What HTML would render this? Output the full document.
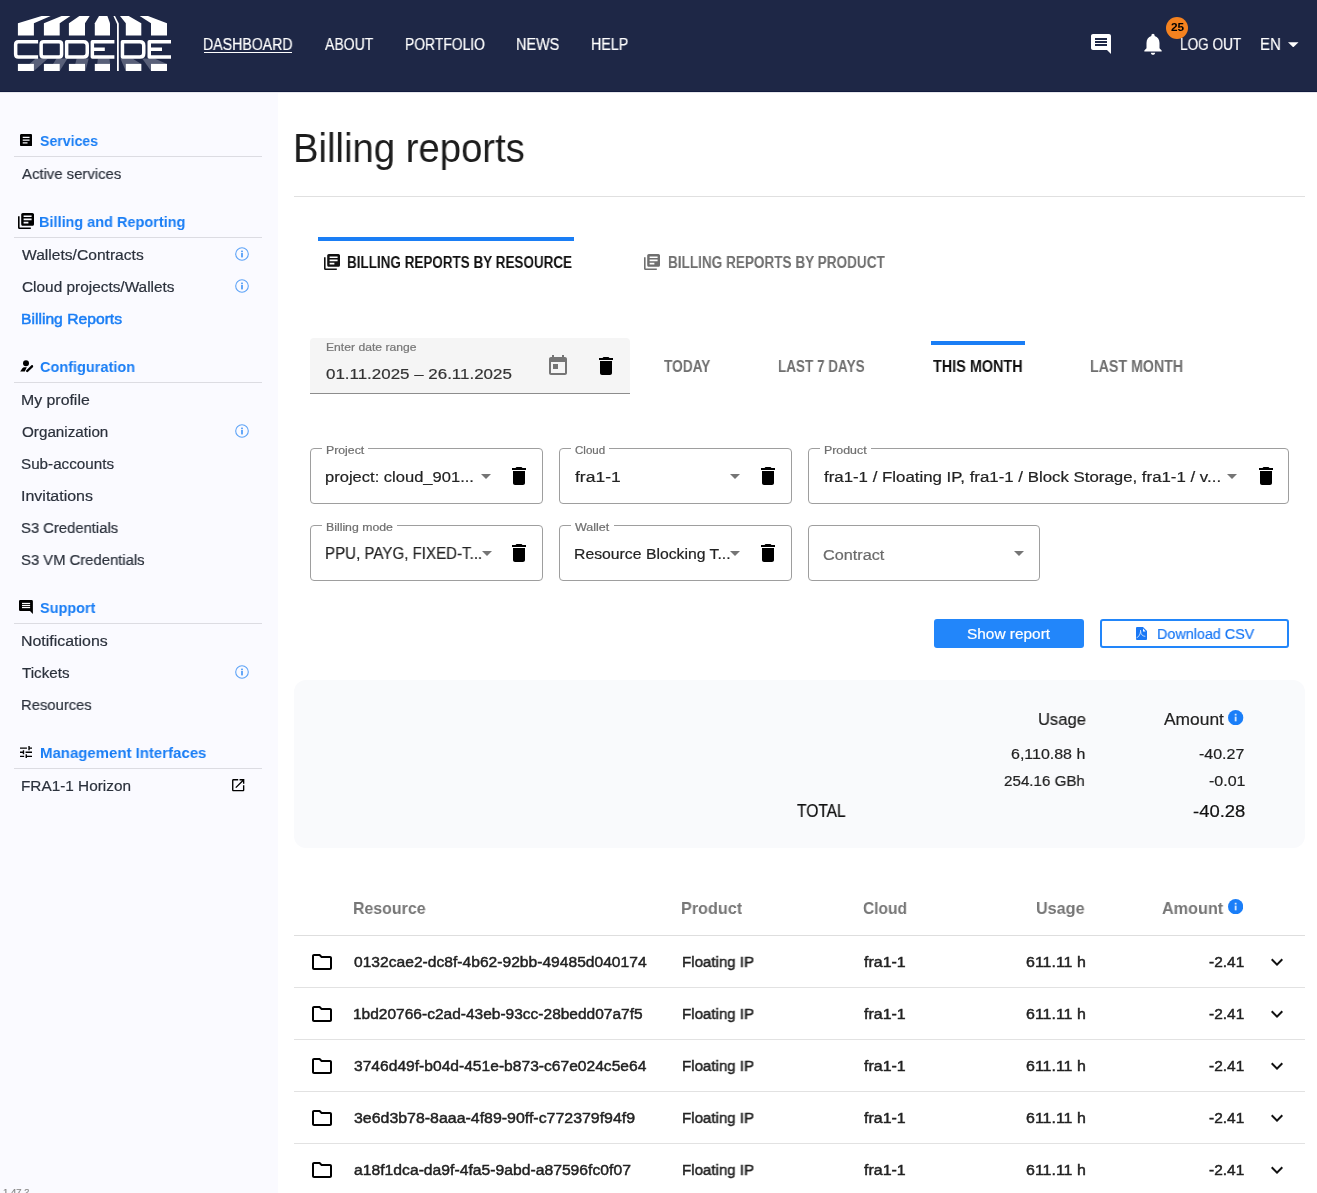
<!DOCTYPE html>
<html><head><meta charset="utf-8"><title>Billing reports</title>
<style>
html,body{margin:0;padding:0;background:#fff;width:1317px;height:1193px;overflow:hidden;position:relative}
.t{position:absolute;white-space:pre;line-height:1;font-family:"Liberation Sans",sans-serif;transform-origin:0 0;will-change:transform}
svg{display:block}
</style></head><body>
<div style="position:absolute;left:0;top:0;width:1317px;height:91px;background:#1e2746"></div>
<div style="position:absolute;left:0;top:91px;width:1317px;height:1px;background:#111a3e"></div>
<div style="position:absolute;left:0;top:92px;width:1317px;height:1px;background:#e6e7ec"></div>
<div style="position:absolute;left:204px;top:52px;width:88px;height:1px;background:#fff"></div>
<svg style="position:absolute;left:1288px;top:41.5px" width="10.5" height="5.5" viewBox="0 0 10 5"><path d="M0 0h10L5 5z" fill="#fff"/></svg>
<svg style="position:absolute;left:1089px;top:32px" width="24" height="24" viewBox="0 0 24 24"><path fill="#fff" d="M21.99 4c0-1.1-.89-2-1.99-2H4c-1.1 0-2 .9-2 2v12c0 1.1.9 2 2 2h14l4 4-.01-18zM18 14H6v-2h12v2zm0-3H6V9h12v2zm0-3H6V6h12v2z"/></svg>
<svg style="position:absolute;left:1140px;top:30.5px" width="26" height="26" viewBox="0 0 24 24"><path fill="#fff" d="M12 22c1.1 0 2-.9 2-2h-4c0 1.1.89 2 2 2zm6-6v-5c0-3.07-1.64-5.64-4.5-6.32V4c0-.83-.67-1.5-1.5-1.5s-1.5.67-1.5 1.5v.68C7.63 5.36 6 7.92 6 11v5l-2 2v1h16v-1l-2-2z"/></svg>
<div style="position:absolute;left:1166px;top:17px;width:22px;height:22px;border-radius:50%;background:#f5821f"></div>
<svg style="position:absolute;left:0;top:0" width="180" height="80" viewBox="0 0 180 80">
<g fill="#596079">
<polygon points="35.6,58.6 47.9,58.6 33.9,71 21.6,71"/>
<polygon points="56.5,58.6 67.5,58.6 59.7,71 48.7,71"/>
<polygon points="76.6,58.6 88.7,58.6 85.5,71 73.5,71"/>
<polygon points="97.9,58.6 109.4,58.6 110.2,64 97.2,64"/>
<polygon points="120.4,58.6 132.5,58.6 141.3,64 141.3,71 125.8,71"/>
<polygon points="142.2,58.6 154.5,58.6 167,64 151,71"/>
</g>
<g fill="#fff">
<polygon points="17.9,23.2 41.6,16.1 50.7,16.1 33.9,23.2 33.9,35.6 17.9,35.6"/>
<polygon points="43.9,23.2 61.6,16.1 70.4,16.1 59.7,23.2 59.7,35.6 43.9,35.6"/>
<polygon points="68.9,23.2 79.4,16.1 89.7,16.1 85,23.2 85,35.6 68.9,35.6"/>
<polygon points="94.8,23.2 99,16.1 107.4,16.1 110,23.2 110,35.6 94.8,35.6"/>
<polygon points="125.8,23.2 120,16.1 128.7,16.1 141.3,23.2 141.3,35.6 125.8,35.6"/>
<polygon points="151,23.2 139.7,16.1 148,16.1 167,23.2 167,35.6 151,35.6"/>
<rect x="17.9" y="63.9" width="16" height="7.1"/>
<rect x="43.9" y="63.9" width="15.8" height="7.1"/>
<rect x="68.9" y="63.9" width="16.1" height="7.1"/>
<rect x="94.8" y="63.9" width="15.2" height="7.1"/>
<rect x="125.8" y="63.9" width="15.5" height="7.1"/>
<rect x="151" y="63.9" width="16" height="7.1"/>
<polygon points="113.4,16 115,16 118.8,23.5 118.8,71 117,71 117,24"/>
</g>

<g fill="none" stroke="#fff" stroke-width="3.5" stroke-linejoin="round">
<path d="M38.1,41.75 H18.4 Q15.65,41.75 15.65,44.5 V54.2 Q15.65,56.95 18.4,56.95 H38.1"/>
<path d="M43.6,41.75 H59.1 Q61.55,41.75 61.55,44.2 V54.5 Q61.55,56.95 59.1,56.95 H43.6 Q41.15,56.95 41.15,54.5 V44.2 Q41.15,41.75 43.6,41.75 Z"/>
<path d="M66.65,41.75 H83.5 Q87.25,41.75 87.25,45.5 V53.2 Q87.25,56.95 83.5,56.95 H66.65 Z"/>
<path d="M114.4,41.75 H92.35 V56.95 H114.4 M92.35,49.35 H104.8"/>
<path d="M122.45,41.75 H140 Q143.75,41.75 143.75,45.5 V53.2 Q143.75,56.95 140,56.95 H122.45 Z"/>
<path d="M171,41.75 H149.25 V56.95 H171 M149.25,49.35 H162"/>
</g>
</svg>
<div style="position:absolute;left:0;top:93px;width:278px;height:1100px;background:#fafaff"></div>
<div style="position:absolute;left:14px;top:156px;width:248px;height:1px;background:#dcdce2"></div>
<div style="position:absolute;left:14px;top:237px;width:248px;height:1px;background:#dcdce2"></div>
<div style="position:absolute;left:14px;top:382px;width:248px;height:1px;background:#dcdce2"></div>
<div style="position:absolute;left:14px;top:623px;width:248px;height:1px;background:#dcdce2"></div>
<div style="position:absolute;left:14px;top:768px;width:248px;height:1px;background:#dcdce2"></div>
<svg style="position:absolute;left:235px;top:247px" width="14" height="14" viewBox="0 0 14 14"><circle cx="7" cy="7" r="6.3" fill="none" stroke="#5da3f7" stroke-width="1.1"/><rect x="6.15" y="5.9" width="1.7" height="4.5" fill="#4a98f7"/><rect x="6.15" y="3.6" width="1.7" height="1.5" fill="#4a98f7"/></svg>
<svg style="position:absolute;left:235px;top:279px" width="14" height="14" viewBox="0 0 14 14"><circle cx="7" cy="7" r="6.3" fill="none" stroke="#5da3f7" stroke-width="1.1"/><rect x="6.15" y="5.9" width="1.7" height="4.5" fill="#4a98f7"/><rect x="6.15" y="3.6" width="1.7" height="1.5" fill="#4a98f7"/></svg>
<svg style="position:absolute;left:235px;top:424px" width="14" height="14" viewBox="0 0 14 14"><circle cx="7" cy="7" r="6.3" fill="none" stroke="#5da3f7" stroke-width="1.1"/><rect x="6.15" y="5.9" width="1.7" height="4.5" fill="#4a98f7"/><rect x="6.15" y="3.6" width="1.7" height="1.5" fill="#4a98f7"/></svg>
<svg style="position:absolute;left:235px;top:665px" width="14" height="14" viewBox="0 0 14 14"><circle cx="7" cy="7" r="6.3" fill="none" stroke="#5da3f7" stroke-width="1.1"/><rect x="6.15" y="5.9" width="1.7" height="4.5" fill="#4a98f7"/><rect x="6.15" y="3.6" width="1.7" height="1.5" fill="#4a98f7"/></svg>
<svg style="position:absolute;left:229.85px;top:776.7px" width="16.4" height="16.4" viewBox="0 0 24 24"><path fill="#000" d="M19 19H5V5h7V3H5c-1.11 0-2 .9-2 2v14c0 1.1.89 2 2 2h14c1.1 0 2-.9 2-2v-7h-2v7zM14 3v2h3.59l-9.83 9.83 1.41 1.41L19 6.41V10h2V3h-7z"/></svg>
<svg style="position:absolute;left:19.8px;top:133.8px" width="12.3" height="12.3" viewBox="3 3 18 18"><path fill="#000" d="M19 3H5c-1.1 0-2 .9-2 2v14c0 1.1.9 2 2 2h14c1.1 0 2-.9 2-2V5c0-1.1-.9-2-2-2zm-5 14H7v-2h7v2zm3-4H7v-2h10v2zm0-4H7V7h10v2z"/></svg>
<svg style="position:absolute;left:18px;top:213px" width="16" height="16" viewBox="2 2 20 20"><path fill="#000" d="M4 6H2v14c0 1.1.9 2 2 2h14v-2H4V6zm16-4H8c-1.1 0-2 .9-2 2v12c0 1.1.9 2 2 2h12c1.1 0 2-.9 2-2V4c0-1.1-.9-2-2-2zm-1 9H9V9h10v2zm-4 4H9v-2h6v2zm4-8H9V5h10v2z"/></svg>
<svg style="position:absolute;left:14px;top:354px" width="26" height="24" viewBox="0 0 26 24"><circle cx="12" cy="9.2" r="3" fill="#000"/><path d="M6.2,17.5 L8.2,14.6 Q9,13.3 10.5,13.3 L12.8,13.3 L10.8,17.5 Z" fill="#000"/><path d="M13.2,17 L18,12.3" stroke="#000" stroke-width="2.4" stroke-linecap="round"/><path d="M17.3,11.3 L19,11.7 L18.6,13.4Z" fill="#000"/></svg>
<svg style="position:absolute;left:19px;top:600px" width="14" height="14" viewBox="0 0 14 14"><path fill="#000" d="M1.3,0 H12.6 Q13.9,0 13.9,1.3 V13.9 L11,11 H1.3 Q0,11 0,9.7 V1.3 Q0,0 1.3,0 Z"/><rect x="3" y="2.85" width="8.1" height="1.2" fill="#fff"/><rect x="3" y="4.9" width="8.1" height="1.2" fill="#fff"/><rect x="3" y="6.95" width="8.1" height="1.2" fill="#fff"/></svg>
<svg style="position:absolute;left:19.6px;top:745.8px" width="12.5" height="12.5" viewBox="3 3 18 18"><path fill="#000" d="M3 17v2h6v-2H3zM3 5v2h10V5H3zm10 16v-2h8v-2h-8v-2h-2v6h2zM7 9v2H3v2h4v2h2V9H7zm14 4v-2H11v2h10zm-6-4h2V7h4V5h-4V3h-2v6z"/></svg>
<div style="position:absolute;left:294px;top:196px;width:1011px;height:1px;background:#e0e0e0"></div>
<div style="position:absolute;left:318px;top:237px;width:256px;height:4px;background:#1a7ef5"></div>
<svg style="position:absolute;left:324px;top:254px" width="16" height="16" viewBox="2 2 20 20"><path fill="#111" d="M4 6H2v14c0 1.1.9 2 2 2h14v-2H4V6zm16-4H8c-1.1 0-2 .9-2 2v12c0 1.1.9 2 2 2h12c1.1 0 2-.9 2-2V4c0-1.1-.9-2-2-2zm-1 9H9V9h10v2zm-4 4H9v-2h6v2zm4-8H9V5h10v2z"/></svg>
<svg style="position:absolute;left:644px;top:254px" width="16" height="16" viewBox="2 2 20 20"><path fill="#6f6f6f" d="M4 6H2v14c0 1.1.9 2 2 2h14v-2H4V6zm16-4H8c-1.1 0-2 .9-2 2v12c0 1.1.9 2 2 2h12c1.1 0 2-.9 2-2V4c0-1.1-.9-2-2-2zm-1 9H9V9h10v2zm-4 4H9v-2h6v2zm4-8H9V5h10v2z"/></svg>
<div style="position:absolute;left:310px;top:338px;width:320px;height:55px;background:#f5f5f5;border-radius:4px 4px 0 0;border-bottom:1px solid #8d8d8d"></div>
<svg style="position:absolute;left:546px;top:354px" width="24" height="24" viewBox="0 0 24 24"><path fill="#757575" d="M19 3h-1V1h-2v2H8V1H6v2H5c-1.11 0-1.99.9-1.99 2L3 19c0 1.1.89 2 2 2h14c1.1 0 2-.9 2-2V5c0-1.1-.9-2-2-2zm0 16H5V8h14v11zM7 10h5v5H7z"/></svg>
<svg style="position:absolute;left:594px;top:354px" width="24" height="24" viewBox="0 0 24 24"><path fill="#000" d="M6 19c0 1.1.9 2 2 2h8c1.1 0 2-.9 2-2V7H6v12zM19 4h-3.5l-1-1h-5l-1 1H5v2h14V4z"/></svg>
<div style="position:absolute;left:931px;top:341px;width:94px;height:4px;background:#1a7ef5"></div>
<div style="position:absolute;left:310px;top:448px;width:231px;height:54px;border:1px solid #9e9e9e;border-radius:4px"></div>
<div style="position:absolute;left:321.5px;top:446px;width:46.60000000000002px;height:4px;background:#fff"></div>
<svg style="position:absolute;left:481px;top:474px" width="10" height="5" viewBox="0 0 10 5"><path d="M0 0h10L5 5z" fill="#757575"/></svg>
<svg style="position:absolute;left:507px;top:464px" width="24" height="24" viewBox="0 0 24 24"><path fill="#000" d="M6 19c0 1.1.9 2 2 2h8c1.1 0 2-.9 2-2V7H6v12zM19 4h-3.5l-1-1h-5l-1 1H5v2h14V4z"/></svg>
<div style="position:absolute;left:559px;top:448px;width:231px;height:54px;border:1px solid #9e9e9e;border-radius:4px"></div>
<div style="position:absolute;left:570.5px;top:446px;width:38.299999999999955px;height:4px;background:#fff"></div>
<svg style="position:absolute;left:730px;top:474px" width="10" height="5" viewBox="0 0 10 5"><path d="M0 0h10L5 5z" fill="#757575"/></svg>
<svg style="position:absolute;left:756px;top:464px" width="24" height="24" viewBox="0 0 24 24"><path fill="#000" d="M6 19c0 1.1.9 2 2 2h8c1.1 0 2-.9 2-2V7H6v12zM19 4h-3.5l-1-1h-5l-1 1H5v2h14V4z"/></svg>
<div style="position:absolute;left:808px;top:448px;width:479px;height:54px;border:1px solid #9e9e9e;border-radius:4px"></div>
<div style="position:absolute;left:819.5px;top:446px;width:51.0px;height:4px;background:#fff"></div>
<svg style="position:absolute;left:1227px;top:474px" width="10" height="5" viewBox="0 0 10 5"><path d="M0 0h10L5 5z" fill="#757575"/></svg>
<svg style="position:absolute;left:1253.7px;top:464px" width="24" height="24" viewBox="0 0 24 24"><path fill="#000" d="M6 19c0 1.1.9 2 2 2h8c1.1 0 2-.9 2-2V7H6v12zM19 4h-3.5l-1-1h-5l-1 1H5v2h14V4z"/></svg>
<div style="position:absolute;left:310px;top:525px;width:231px;height:54px;border:1px solid #9e9e9e;border-radius:4px"></div>
<div style="position:absolute;left:321.5px;top:523px;width:75.0px;height:4px;background:#fff"></div>
<svg style="position:absolute;left:481.5px;top:551px" width="10" height="5" viewBox="0 0 10 5"><path d="M0 0h10L5 5z" fill="#757575"/></svg>
<svg style="position:absolute;left:507px;top:541px" width="24" height="24" viewBox="0 0 24 24"><path fill="#000" d="M6 19c0 1.1.9 2 2 2h8c1.1 0 2-.9 2-2V7H6v12zM19 4h-3.5l-1-1h-5l-1 1H5v2h14V4z"/></svg>
<div style="position:absolute;left:559px;top:525px;width:231px;height:54px;border:1px solid #9e9e9e;border-radius:4px"></div>
<div style="position:absolute;left:570.5px;top:523px;width:43.200000000000045px;height:4px;background:#fff"></div>
<svg style="position:absolute;left:730px;top:551px" width="10" height="5" viewBox="0 0 10 5"><path d="M0 0h10L5 5z" fill="#757575"/></svg>
<svg style="position:absolute;left:756px;top:541px" width="24" height="24" viewBox="0 0 24 24"><path fill="#000" d="M6 19c0 1.1.9 2 2 2h8c1.1 0 2-.9 2-2V7H6v12zM19 4h-3.5l-1-1h-5l-1 1H5v2h14V4z"/></svg>
<div style="position:absolute;left:808px;top:525px;width:230px;height:54px;border:1px solid #9e9e9e;border-radius:4px"></div>
<svg style="position:absolute;left:1014px;top:551px" width="10" height="5" viewBox="0 0 10 5"><path d="M0 0h10L5 5z" fill="#757575"/></svg>
<div style="position:absolute;left:934px;top:619px;width:150px;height:29px;background:#2286fa;border-radius:3px"></div>
<div style="position:absolute;left:1100px;top:619px;width:185px;height:25px;border:2px solid #2286fa;border-radius:3px"></div>
<svg style="position:absolute;left:1136px;top:627px" width="11" height="13" viewBox="0 0 11 13"><path d="M1,0 H7 L11,4 V12 Q11,13 10,13 H1 Q0,13 0,12 V1 Q0,0 1,0Z" fill="#1a78f5"/><path d="M7,1.6 L9.6,4.6 H7Z" fill="#fff"/><path d="M0.6,10.8 Q3,10 4,7 Q4.8,4 4.5,3.3 Q4.5,7 6.5,8.5 Q8,9.3 9.3,9.3" fill="none" stroke="#cfe2fd" stroke-width="0.9"/></svg>
<div style="position:absolute;left:294px;top:680px;width:1011px;height:168px;background:#f9fafc;border-radius:12px"></div>
<svg style="position:absolute;left:1228.3px;top:710.2px" width="15.3" height="15.3" viewBox="0 0 15 15"><circle cx="7.5" cy="7.5" r="7.5" fill="#1a7ef8"/><rect x="6.6" y="6.5" width="1.8" height="4.6" fill="#d5e6fd"/><rect x="6.6" y="3.7" width="1.8" height="1.7" fill="#d5e6fd"/></svg>
<svg style="position:absolute;left:1228px;top:899.2px" width="15.3" height="15.3" viewBox="0 0 15 15"><circle cx="7.5" cy="7.5" r="7.5" fill="#1a7ef8"/><rect x="6.6" y="6.5" width="1.8" height="4.6" fill="#d5e6fd"/><rect x="6.6" y="3.7" width="1.8" height="1.7" fill="#d5e6fd"/></svg>
<div style="position:absolute;left:294px;top:935px;width:1011px;height:1px;background:#dedede"></div>
<svg style="position:absolute;left:310px;top:950px" width="24" height="24" viewBox="0 0 24 24"><path fill="#000" d="M9.17 6l2 2H20v10H4V6h5.17M10 4H4c-1.1 0-1.99.9-1.99 2L2 18c0 1.1.9 2 2 2h16c1.1 0 2-.9 2-2V8c0-1.1-.9-2-2-2h-8l-2-2z"/></svg>
<svg style="position:absolute;left:1264.5px;top:949.8px" width="24" height="24" viewBox="0 0 24 24"><path fill="#111" d="M16.59 8.59L12 13.17 7.41 8.59 6 10l6 6 6-6z"/></svg>
<div style="position:absolute;left:294px;top:987px;width:1011px;height:1px;background:#e2e2e2"></div>
<svg style="position:absolute;left:310px;top:1002px" width="24" height="24" viewBox="0 0 24 24"><path fill="#000" d="M9.17 6l2 2H20v10H4V6h5.17M10 4H4c-1.1 0-1.99.9-1.99 2L2 18c0 1.1.9 2 2 2h16c1.1 0 2-.9 2-2V8c0-1.1-.9-2-2-2h-8l-2-2z"/></svg>
<svg style="position:absolute;left:1264.5px;top:1001.8px" width="24" height="24" viewBox="0 0 24 24"><path fill="#111" d="M16.59 8.59L12 13.17 7.41 8.59 6 10l6 6 6-6z"/></svg>
<div style="position:absolute;left:294px;top:1039px;width:1011px;height:1px;background:#e2e2e2"></div>
<svg style="position:absolute;left:310px;top:1054px" width="24" height="24" viewBox="0 0 24 24"><path fill="#000" d="M9.17 6l2 2H20v10H4V6h5.17M10 4H4c-1.1 0-1.99.9-1.99 2L2 18c0 1.1.9 2 2 2h16c1.1 0 2-.9 2-2V8c0-1.1-.9-2-2-2h-8l-2-2z"/></svg>
<svg style="position:absolute;left:1264.5px;top:1053.8px" width="24" height="24" viewBox="0 0 24 24"><path fill="#111" d="M16.59 8.59L12 13.17 7.41 8.59 6 10l6 6 6-6z"/></svg>
<div style="position:absolute;left:294px;top:1091px;width:1011px;height:1px;background:#e2e2e2"></div>
<svg style="position:absolute;left:310px;top:1106px" width="24" height="24" viewBox="0 0 24 24"><path fill="#000" d="M9.17 6l2 2H20v10H4V6h5.17M10 4H4c-1.1 0-1.99.9-1.99 2L2 18c0 1.1.9 2 2 2h16c1.1 0 2-.9 2-2V8c0-1.1-.9-2-2-2h-8l-2-2z"/></svg>
<svg style="position:absolute;left:1264.5px;top:1105.8px" width="24" height="24" viewBox="0 0 24 24"><path fill="#111" d="M16.59 8.59L12 13.17 7.41 8.59 6 10l6 6 6-6z"/></svg>
<div style="position:absolute;left:294px;top:1143px;width:1011px;height:1px;background:#e2e2e2"></div>
<svg style="position:absolute;left:310px;top:1158px" width="24" height="24" viewBox="0 0 24 24"><path fill="#000" d="M9.17 6l2 2H20v10H4V6h5.17M10 4H4c-1.1 0-1.99.9-1.99 2L2 18c0 1.1.9 2 2 2h16c1.1 0 2-.9 2-2V8c0-1.1-.9-2-2-2h-8l-2-2z"/></svg>
<svg style="position:absolute;left:1264.5px;top:1157.8px" width="24" height="24" viewBox="0 0 24 24"><path fill="#111" d="M16.59 8.59L12 13.17 7.41 8.59 6 10l6 6 6-6z"/></svg>
<div class="t" id="t0" style="left:203.14px;top:36.52px;font-size:16.00px;font-weight:400;color:#ffffff;transform:scaleX(0.8837);-webkit-text-stroke:0.2px currentColor;">DASHBOARD</div>
<div class="t" id="t1" style="left:324.54px;top:36.52px;font-size:16.00px;font-weight:400;color:#ffffff;transform:scaleX(0.8775);-webkit-text-stroke:0.2px currentColor;">ABOUT</div>
<div class="t" id="t2" style="left:404.95px;top:36.52px;font-size:16.00px;font-weight:400;color:#ffffff;transform:scaleX(0.8662);-webkit-text-stroke:0.2px currentColor;">PORTFOLIO</div>
<div class="t" id="t3" style="left:516.21px;top:36.52px;font-size:16.00px;font-weight:400;color:#ffffff;transform:scaleX(0.9028);-webkit-text-stroke:0.2px currentColor;">NEWS</div>
<div class="t" id="t4" style="left:590.78px;top:36.52px;font-size:16.00px;font-weight:400;color:#ffffff;transform:scaleX(0.8890);-webkit-text-stroke:0.2px currentColor;">HELP</div>
<div class="t" id="t5" style="left:1180.35px;top:36.52px;font-size:16.00px;font-weight:400;color:#ffffff;transform:scaleX(0.8496);-webkit-text-stroke:0.2px currentColor;">LOG OUT</div>
<div class="t" id="t6" style="left:1260.46px;top:36.52px;font-size:16.00px;font-weight:400;color:#ffffff;transform:scaleX(0.9367);-webkit-text-stroke:0.2px currentColor;">EN</div>
<div class="t" id="t7" style="left:1170.51px;top:22.15px;font-size:11.40px;font-weight:700;color:#000;transform:scaleX(1.0359);">25</div>
<div class="t" id="t8" style="left:40.03px;top:133.20px;font-size:15.20px;font-weight:700;color:#1a7ef5;transform:scaleX(0.9287);">Services</div>
<div class="t" id="t9" style="left:39.10px;top:214.20px;font-size:15.20px;font-weight:700;color:#1a7ef5;transform:scaleX(0.9533);">Billing and Reporting</div>
<div class="t" id="t10" style="left:40.00px;top:359.20px;font-size:15.20px;font-weight:700;color:#1a7ef5;transform:scaleX(0.9553);">Configuration</div>
<div class="t" id="t11" style="left:40.03px;top:600.20px;font-size:15.20px;font-weight:700;color:#1a7ef5;transform:scaleX(0.9503);">Support</div>
<div class="t" id="t12" style="left:39.87px;top:745.20px;font-size:15.20px;font-weight:700;color:#1a7ef5;transform:scaleX(0.9856);">Management Interfaces</div>
<div class="t" id="t13" style="left:22.07px;top:166.20px;font-size:15.20px;font-weight:400;color:#2b313c;transform:scaleX(0.9799);-webkit-text-stroke:0.2px currentColor;">Active services</div>
<div class="t" id="t14" style="left:22.12px;top:247.20px;font-size:15.20px;font-weight:400;color:#2b313c;transform:scaleX(1.0277);-webkit-text-stroke:0.2px currentColor;">Wallets/Contracts</div>
<div class="t" id="t15" style="left:21.79px;top:279.20px;font-size:15.20px;font-weight:400;color:#2b313c;transform:scaleX(1.0133);-webkit-text-stroke:0.2px currentColor;">Cloud projects/Wallets</div>
<div class="t" id="t16" style="left:20.91px;top:392.20px;font-size:15.20px;font-weight:400;color:#2b313c;transform:scaleX(1.0442);-webkit-text-stroke:0.2px currentColor;">My profile</div>
<div class="t" id="t17" style="left:21.89px;top:424.20px;font-size:15.20px;font-weight:400;color:#2b313c;transform:scaleX(1.0023);-webkit-text-stroke:0.2px currentColor;">Organization</div>
<div class="t" id="t18" style="left:21.44px;top:456.20px;font-size:15.20px;font-weight:400;color:#2b313c;transform:scaleX(1.0014);-webkit-text-stroke:0.2px currentColor;">Sub-accounts</div>
<div class="t" id="t19" style="left:21.39px;top:488.20px;font-size:15.20px;font-weight:400;color:#2b313c;transform:scaleX(1.0526);-webkit-text-stroke:0.2px currentColor;">Invitations</div>
<div class="t" id="t20" style="left:21.44px;top:520.20px;font-size:15.20px;font-weight:400;color:#2b313c;transform:scaleX(0.9748);-webkit-text-stroke:0.2px currentColor;">S3 Credentials</div>
<div class="t" id="t21" style="left:21.44px;top:552.20px;font-size:15.20px;font-weight:400;color:#2b313c;transform:scaleX(0.9760);-webkit-text-stroke:0.2px currentColor;">S3 VM Credentials</div>
<div class="t" id="t22" style="left:20.90px;top:633.20px;font-size:15.20px;font-weight:400;color:#2b313c;transform:scaleX(1.0481);-webkit-text-stroke:0.2px currentColor;">Notifications</div>
<div class="t" id="t23" style="left:21.87px;top:665.20px;font-size:15.20px;font-weight:400;color:#2b313c;transform:scaleX(0.9996);-webkit-text-stroke:0.2px currentColor;">Tickets</div>
<div class="t" id="t24" style="left:21.08px;top:697.20px;font-size:15.20px;font-weight:400;color:#2b313c;transform:scaleX(0.9738);-webkit-text-stroke:0.2px currentColor;">Resources</div>
<div class="t" id="t25" style="left:21.02px;top:778.20px;font-size:15.20px;font-weight:400;color:#2b313c;transform:scaleX(1.0099);-webkit-text-stroke:0.2px currentColor;">FRA1-1 Horizon</div>
<div class="t" id="t26" style="left:21.25px;top:311.20px;font-size:15.20px;font-weight:400;color:#1a7ef5;transform:scaleX(1.0319);-webkit-text-stroke:0.5px currentColor;">Billing Reports</div>
<div class="t" id="t27" style="left:2.65px;top:1186.87px;font-size:9.50px;font-weight:400;color:#888;transform:scaleX(0.9948);-webkit-text-stroke:0.2px currentColor;">1.47.2</div>
<div class="t" id="t28" style="left:293.43px;top:129.26px;font-size:39.90px;font-weight:400;color:#1c1c1c;transform:scaleX(0.9591);-webkit-text-stroke:0;">Billing reports</div>
<div class="t" id="t29" style="left:347.09px;top:254.52px;font-size:16.00px;font-weight:700;color:#111;transform:scaleX(0.8422);">BILLING REPORTS BY RESOURCE</div>
<div class="t" id="t30" style="left:667.98px;top:254.52px;font-size:16.00px;font-weight:700;color:#6f6f6f;transform:scaleX(0.8478);">BILLING REPORTS BY PRODUCT</div>
<div class="t" id="t31" style="left:325.72px;top:342.96px;font-size:10.45px;font-weight:400;color:#777;transform:scaleX(1.1630);-webkit-text-stroke:0.2px currentColor;">Enter date range</div>
<div class="t" id="t32" style="left:325.69px;top:366.40px;font-size:15.20px;font-weight:400;color:#333;transform:scaleX(1.1151);-webkit-text-stroke:0.2px currentColor;">01.11.2025 – 26.11.2025</div>
<div class="t" id="t33" style="left:664.21px;top:358.52px;font-size:16.00px;font-weight:700;color:#6f6f6f;transform:scaleX(0.8549);">TODAY</div>
<div class="t" id="t34" style="left:777.99px;top:358.52px;font-size:16.00px;font-weight:700;color:#6f6f6f;transform:scaleX(0.8443);">LAST 7 DAYS</div>
<div class="t" id="t35" style="left:933.18px;top:358.52px;font-size:16.00px;font-weight:700;color:#111;transform:scaleX(0.9001);">THIS MONTH</div>
<div class="t" id="t36" style="left:1089.92px;top:358.52px;font-size:16.00px;font-weight:700;color:#6f6f6f;transform:scaleX(0.8880);">LAST MONTH</div>
<div class="t" id="t37" style="left:325.69px;top:445.56px;font-size:10.45px;font-weight:400;color:#6f6f6f;transform:scaleX(1.1765);-webkit-text-stroke:0.2px currentColor;">Project</div>
<div class="t" id="t38" style="left:325.21px;top:469.20px;font-size:15.20px;font-weight:400;color:#222;transform:scaleX(1.0889);-webkit-text-stroke:0.2px currentColor;">project: cloud_901...</div>
<div class="t" id="t39" style="left:574.82px;top:445.56px;font-size:10.45px;font-weight:400;color:#6f6f6f;transform:scaleX(1.1063);-webkit-text-stroke:0.2px currentColor;">Cloud</div>
<div class="t" id="t40" style="left:574.83px;top:469.20px;font-size:15.20px;font-weight:400;color:#222;transform:scaleX(1.1517);-webkit-text-stroke:0.2px currentColor;">fra1-1</div>
<div class="t" id="t41" style="left:823.67px;top:445.56px;font-size:10.45px;font-weight:400;color:#6f6f6f;transform:scaleX(1.1848);-webkit-text-stroke:0.2px currentColor;">Product</div>
<div class="t" id="t42" style="left:823.82px;top:469.20px;font-size:15.20px;font-weight:400;color:#222;transform:scaleX(1.1085);-webkit-text-stroke:0.2px currentColor;">fra1-1 / Floating IP, fra1-1 / Block Storage, fra1-1 / v...</div>
<div class="t" id="t43" style="left:325.69px;top:522.56px;font-size:10.45px;font-weight:400;color:#6f6f6f;transform:scaleX(1.1771);-webkit-text-stroke:0.2px currentColor;">Billing mode</div>
<div class="t" id="t44" style="left:324.57px;top:545.52px;font-size:16.00px;font-weight:400;color:#222;transform:scaleX(0.9437);-webkit-text-stroke:0.2px currentColor;">PPU, PAYG, FIXED-T...</div>
<div class="t" id="t45" style="left:574.80px;top:522.56px;font-size:10.45px;font-weight:400;color:#6f6f6f;transform:scaleX(1.1970);-webkit-text-stroke:0.2px currentColor;">Wallet</div>
<div class="t" id="t46" style="left:573.82px;top:546.20px;font-size:15.20px;font-weight:400;color:#222;transform:scaleX(1.0384);-webkit-text-stroke:0.2px currentColor;">Resource Blocking T...</div>
<div class="t" id="t47" style="left:823.39px;top:547.20px;font-size:15.20px;font-weight:400;color:#6b6b6b;transform:scaleX(1.0691);-webkit-text-stroke:0.2px currentColor;">Contract</div>
<div class="t" id="t48" style="left:967.11px;top:625.70px;font-size:15.20px;font-weight:400;color:#fff;transform:scaleX(1.0141);-webkit-text-stroke:0.2px currentColor;">Show report</div>
<div class="t" id="t49" style="left:1156.56px;top:625.70px;font-size:15.20px;font-weight:400;color:#1a78f5;transform:scaleX(0.9450);-webkit-text-stroke:0.2px currentColor;">Download CSV</div>
<div class="t" id="t50" style="left:1037.63px;top:710.77px;font-size:17.10px;font-weight:400;color:#222;transform:scaleX(0.9685);-webkit-text-stroke:0.2px currentColor;">Usage</div>
<div class="t" id="t51" style="left:1164.31px;top:710.77px;font-size:17.10px;font-weight:400;color:#222;transform:scaleX(1.0168);-webkit-text-stroke:0.2px currentColor;">Amount</div>
<div class="t" id="t52" style="left:1011.19px;top:745.50px;font-size:15.20px;font-weight:400;color:#222;transform:scaleX(1.0519);-webkit-text-stroke:0.2px currentColor;">6,110.88 h</div>
<div class="t" id="t53" style="left:1199.43px;top:745.50px;font-size:15.20px;font-weight:400;color:#222;transform:scaleX(1.0526);-webkit-text-stroke:0.2px currentColor;">-40.27</div>
<div class="t" id="t54" style="left:1004.42px;top:773.40px;font-size:15.20px;font-weight:400;color:#222;transform:scaleX(0.9975);-webkit-text-stroke:0.2px currentColor;">254.16 GBh</div>
<div class="t" id="t55" style="left:1208.55px;top:773.40px;font-size:15.20px;font-weight:400;color:#222;transform:scaleX(1.0548);-webkit-text-stroke:0.2px currentColor;">-0.01</div>
<div class="t" id="t56" style="left:797.03px;top:802.21px;font-size:18.00px;font-weight:400;color:#111;transform:scaleX(0.8643);-webkit-text-stroke:0.2px currentColor;">TOTAL</div>
<div class="t" id="t57" style="left:1193.01px;top:802.97px;font-size:17.10px;font-weight:400;color:#111;transform:scaleX(1.0785);-webkit-text-stroke:0.2px currentColor;">-40.28</div>
<div class="t" id="t58" style="left:353.27px;top:899.97px;font-size:17.10px;font-weight:700;color:#767676;transform:scaleX(0.9305);">Resource</div>
<div class="t" id="t59" style="left:681.47px;top:899.97px;font-size:17.10px;font-weight:700;color:#767676;transform:scaleX(0.9460);">Product</div>
<div class="t" id="t60" style="left:862.97px;top:899.97px;font-size:17.10px;font-weight:700;color:#767676;transform:scaleX(0.9085);">Cloud</div>
<div class="t" id="t61" style="left:1036.18px;top:899.97px;font-size:17.10px;font-weight:700;color:#767676;transform:scaleX(0.9480);">Usage</div>
<div class="t" id="t62" style="left:1162.21px;top:899.97px;font-size:17.10px;font-weight:700;color:#767676;transform:scaleX(0.9478);">Amount</div>
<div class="t" id="t63" style="left:354.16px;top:954.20px;font-size:15.20px;font-weight:400;color:#222;transform:scaleX(1.0282);-webkit-text-stroke:0.45px currentColor;">0132cae2-dc8f-4b62-92bb-49485d040174</div>
<div class="t" id="t64" style="left:681.50px;top:954.20px;font-size:15.20px;font-weight:400;color:#222;transform:scaleX(0.9926);-webkit-text-stroke:0.45px currentColor;">Floating IP</div>
<div class="t" id="t65" style="left:863.83px;top:954.20px;font-size:15.20px;font-weight:400;color:#222;transform:scaleX(1.0516);-webkit-text-stroke:0.45px currentColor;">fra1-1</div>
<div class="t" id="t66" style="left:1025.51px;top:954.20px;font-size:15.20px;font-weight:400;color:#222;transform:scaleX(1.0519);-webkit-text-stroke:0.45px currentColor;">611.11 h</div>
<div class="t" id="t67" style="left:1209.48px;top:954.20px;font-size:15.20px;font-weight:400;color:#222;transform:scaleX(1.0176);-webkit-text-stroke:0.45px currentColor;">-2.41</div>
<div class="t" id="t68" style="left:352.98px;top:1006.20px;font-size:15.20px;font-weight:400;color:#222;transform:scaleX(1.0209);-webkit-text-stroke:0.45px currentColor;">1bd20766-c2ad-43eb-93cc-28bedd07a7f5</div>
<div class="t" id="t69" style="left:681.50px;top:1006.20px;font-size:15.20px;font-weight:400;color:#222;transform:scaleX(0.9926);-webkit-text-stroke:0.45px currentColor;">Floating IP</div>
<div class="t" id="t70" style="left:863.83px;top:1006.20px;font-size:15.20px;font-weight:400;color:#222;transform:scaleX(1.0516);-webkit-text-stroke:0.45px currentColor;">fra1-1</div>
<div class="t" id="t71" style="left:1025.51px;top:1006.20px;font-size:15.20px;font-weight:400;color:#222;transform:scaleX(1.0519);-webkit-text-stroke:0.45px currentColor;">611.11 h</div>
<div class="t" id="t72" style="left:1209.48px;top:1006.20px;font-size:15.20px;font-weight:400;color:#222;transform:scaleX(1.0176);-webkit-text-stroke:0.45px currentColor;">-2.41</div>
<div class="t" id="t73" style="left:354.14px;top:1058.20px;font-size:15.20px;font-weight:400;color:#222;transform:scaleX(1.0274);-webkit-text-stroke:0.45px currentColor;">3746d49f-b04d-451e-b873-c67e024c5e64</div>
<div class="t" id="t74" style="left:681.50px;top:1058.20px;font-size:15.20px;font-weight:400;color:#222;transform:scaleX(0.9926);-webkit-text-stroke:0.45px currentColor;">Floating IP</div>
<div class="t" id="t75" style="left:863.83px;top:1058.20px;font-size:15.20px;font-weight:400;color:#222;transform:scaleX(1.0516);-webkit-text-stroke:0.45px currentColor;">fra1-1</div>
<div class="t" id="t76" style="left:1025.51px;top:1058.20px;font-size:15.20px;font-weight:400;color:#222;transform:scaleX(1.0519);-webkit-text-stroke:0.45px currentColor;">611.11 h</div>
<div class="t" id="t77" style="left:1209.48px;top:1058.20px;font-size:15.20px;font-weight:400;color:#222;transform:scaleX(1.0176);-webkit-text-stroke:0.45px currentColor;">-2.41</div>
<div class="t" id="t78" style="left:354.10px;top:1110.20px;font-size:15.20px;font-weight:400;color:#222;transform:scaleX(1.0478);-webkit-text-stroke:0.45px currentColor;">3e6d3b78-8aaa-4f89-90ff-c772379f94f9</div>
<div class="t" id="t79" style="left:681.50px;top:1110.20px;font-size:15.20px;font-weight:400;color:#222;transform:scaleX(0.9926);-webkit-text-stroke:0.45px currentColor;">Floating IP</div>
<div class="t" id="t80" style="left:863.83px;top:1110.20px;font-size:15.20px;font-weight:400;color:#222;transform:scaleX(1.0516);-webkit-text-stroke:0.45px currentColor;">fra1-1</div>
<div class="t" id="t81" style="left:1025.51px;top:1110.20px;font-size:15.20px;font-weight:400;color:#222;transform:scaleX(1.0519);-webkit-text-stroke:0.45px currentColor;">611.11 h</div>
<div class="t" id="t82" style="left:1209.48px;top:1110.20px;font-size:15.20px;font-weight:400;color:#222;transform:scaleX(1.0176);-webkit-text-stroke:0.45px currentColor;">-2.41</div>
<div class="t" id="t83" style="left:354.08px;top:1162.20px;font-size:15.20px;font-weight:400;color:#222;transform:scaleX(1.0344);-webkit-text-stroke:0.45px currentColor;">a18f1dca-da9f-4fa5-9abd-a87596fc0f07</div>
<div class="t" id="t84" style="left:681.50px;top:1162.20px;font-size:15.20px;font-weight:400;color:#222;transform:scaleX(0.9926);-webkit-text-stroke:0.45px currentColor;">Floating IP</div>
<div class="t" id="t85" style="left:863.83px;top:1162.20px;font-size:15.20px;font-weight:400;color:#222;transform:scaleX(1.0516);-webkit-text-stroke:0.45px currentColor;">fra1-1</div>
<div class="t" id="t86" style="left:1025.51px;top:1162.20px;font-size:15.20px;font-weight:400;color:#222;transform:scaleX(1.0519);-webkit-text-stroke:0.45px currentColor;">611.11 h</div>
<div class="t" id="t87" style="left:1209.48px;top:1162.20px;font-size:15.20px;font-weight:400;color:#222;transform:scaleX(1.0176);-webkit-text-stroke:0.45px currentColor;">-2.41</div>
</body></html>
